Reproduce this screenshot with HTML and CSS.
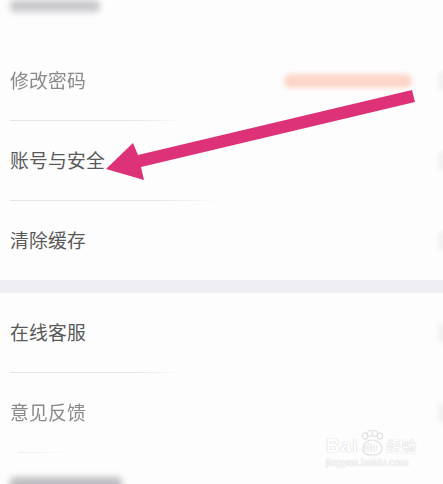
FILE: index.html
```html
<!DOCTYPE html>
<html lang="zh-CN">
<head>
    <meta charset="UTF-8">
    <meta name="viewport" content="width=device-width, initial-scale=1.0">
    <title>设置</title>
    <link rel="stylesheet" href="styles.css">
</head>
<body>
    <div class="page">
        <div class="group">
            <div class="row row-cut">
                <span class="blur-label"></span>
            </div>
            <div class="row">
                <span class="label faded">修改密码</span>
                <span class="value-blur"></span>
                <span class="chevron"></span>
            </div>
            <div class="divider narrow"></div>
            <div class="row">
                <span class="label">账号与安全</span>
                <span class="chevron"></span>
            </div>
            <div class="divider"></div>
            <div class="row">
                <span class="label">清除缓存</span>
                <span class="chevron"></span>
            </div>
        </div>

        <div class="band"></div>

        <div class="group">
            <div class="row">
                <span class="label">在线客服</span>
                <span class="chevron"></span>
            </div>
            <div class="divider narrow"></div>
            <div class="row">
                <span class="label faded">意见反馈</span>
                <span class="chevron"></span>
            </div>
            <div class="divider short"></div>
            <div class="row row-cut">
                <span class="blur-label bottom"></span>
            </div>
        </div>

        <!-- annotation arrow drawn over the screenshot -->
        <svg class="arrow" width="443" height="484" viewBox="0 0 443 484">
            <polygon points="412,90 138,155 133,143 106,169 144,180 141,167 415,102" fill="#dd3178"/>
        </svg>

        <div class="watermark">
            <div class="wm-logo">
                <span class="wm-bai">Bai</span>
                <span class="wm-paw">
                    <svg width="26" height="26" viewBox="0 0 26 26">
                        <g fill="none" stroke="#e2e2e2" stroke-width="1.2">
                            <ellipse cx="6" cy="6" rx="2.6" ry="3.2"/>
                            <ellipse cx="11" cy="3.5" rx="2.6" ry="3"/>
                            <ellipse cx="16" cy="3.5" rx="2.6" ry="3"/>
                            <ellipse cx="21" cy="6" rx="2.6" ry="3.2"/>
                            <path d="M4 19 C4 13 9 10 13 10 C17 10 23 13 23 19 C23 24 19 25 13 25 C7 25 4 24 4 19 Z"/>
                        </g>
                    </svg>
                    <span class="wm-du">du</span>
                </span>
                <span class="wm-jy">经验</span>
            </div>
            <div class="wm-url">jingyan.baidu.com</div>
        </div>
    </div>
</body>
</html>
```

FILE: styles.css
```css
body {
    margin: 0;
    padding: 0;
    background-color: #fff;
    font-family: "Noto Sans CJK SC", "Noto Sans", sans-serif;
}
.page {
    position: relative;
    width: 443px;
    height: 484px;
    overflow: hidden;
    background-color: #fdfdfd;
}
.row {
    height: 79px;
    display: flex;
    align-items: center;
    padding-left: 10px;
}
.row-cut {
    height: 41px;
    align-items: flex-start;
}
.label {
    font-size: 18.8px;
    color: #595959;
    letter-spacing: 0.2px;
    margin-top: -2px;
}
.label.faded {
    color: #8a8a8a;
    filter: blur(0.5px);
}
.value-blur {
    width: 128px;
    height: 14px;
    margin-left: auto;
    margin-right: 26px;
    border-radius: 7px;
    background-color: #fcd6c8;
    filter: blur(2.5px);
}
.chevron {
    width: 8px;
    height: 18px;
    margin-left: auto;
    margin-right: -3px;
    border-radius: 3px;
    background-color: #f2f2f2;
    filter: blur(2px);
}
.value-blur + .chevron {
    margin-left: 0;
}
.blur-label {
    display: block;
    width: 90px;
    height: 12px;
    margin-top: 0;
    border-radius: 5px;
    background-color: #c8c8cc;
    filter: blur(3px);
}
.blur-label.bottom {
    width: 112px;
    height: 16px;
    margin-top: 24px;
    background-color: #bebec2;
}
.divider {
    height: 1px;
    width: 210px;
    margin-left: 10px;
    background: linear-gradient(to right, #e6e6e8 70%, rgba(230, 230, 232, 0));
}
.divider.narrow {
    width: 175px;
}
.divider.short {
    width: 55px;
    margin-left: 18px;
    background: linear-gradient(to right, #efeff1, rgba(239, 239, 241, 0));
}
.band {
    height: 13px;
    background-color: #efeff3;
}
.arrow {
    position: absolute;
    top: 0;
    left: 0;
}
.watermark {
    position: absolute;
    left: 326px;
    top: 428px;
    width: 92px;
    color: #ffffff;
    text-shadow: 0 0 1px #cfcfcf, 0 0 1px #cfcfcf;
    font-family: "Liberation Sans", sans-serif;
}
.wm-logo {
    display: flex;
    align-items: flex-end;
    height: 28px;
}
.wm-bai {
    font-size: 19px;
    font-weight: bold;
    line-height: 20px;
    letter-spacing: 1px;
}
.wm-paw {
    position: relative;
    width: 26px;
    height: 26px;
}
.wm-du {
    position: absolute;
    left: 6px;
    top: 12px;
    font-size: 10px;
    font-weight: bold;
}
.wm-jy {
    font-family: "Noto Sans CJK SC", sans-serif;
    font-size: 15px;
    line-height: 20px;
    margin-left: 2px;
}
.wm-url {
    font-size: 10px;
    line-height: 12px;
    margin-top: 1px;
    letter-spacing: 0.1px;
}
```
